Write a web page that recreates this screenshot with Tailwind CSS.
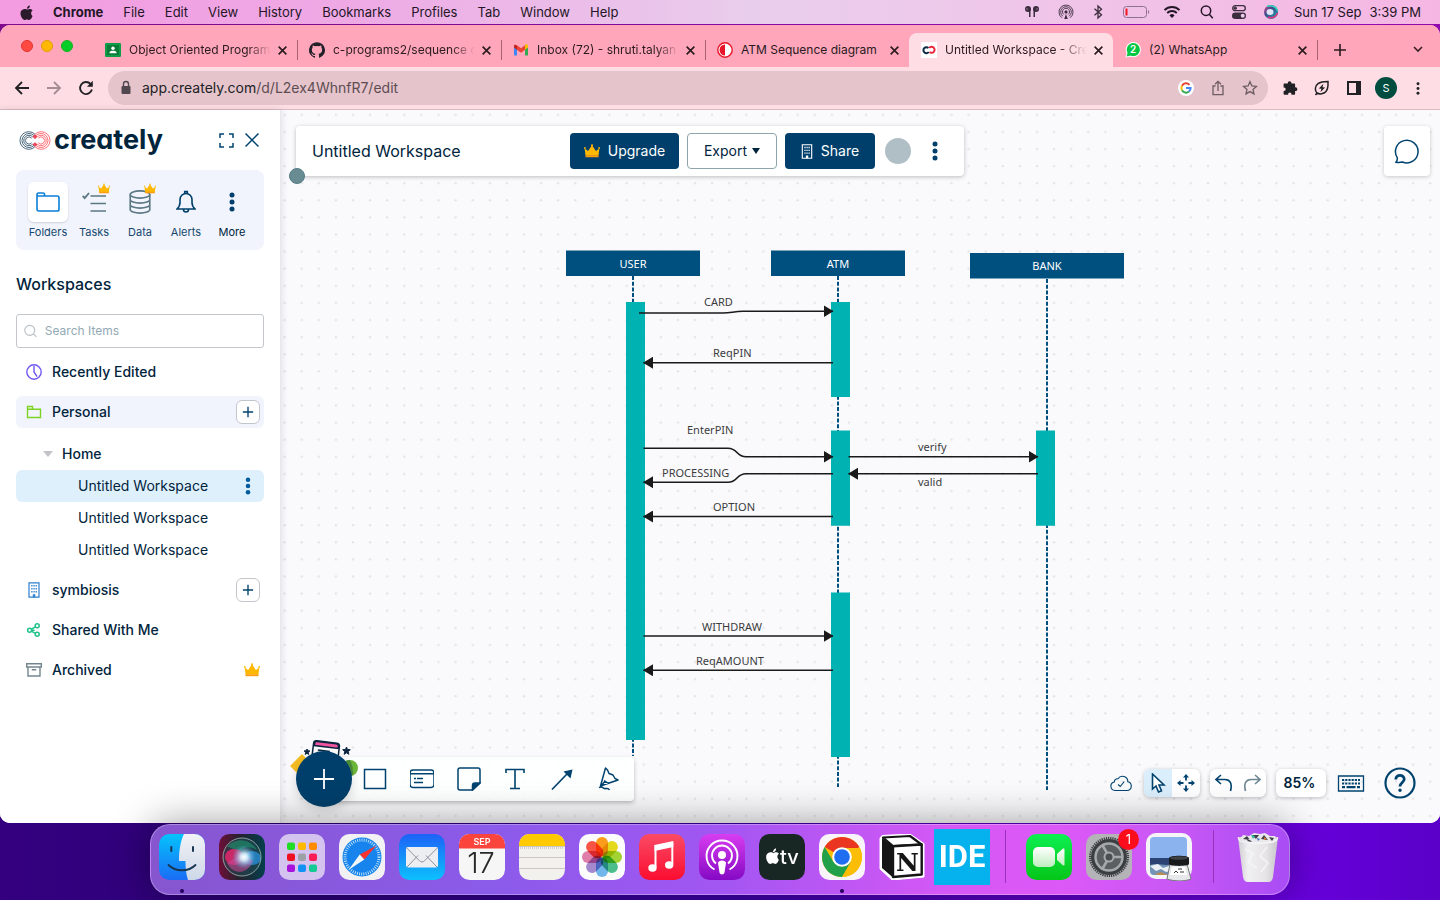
<!DOCTYPE html>
<html lang="en">
<head>
<meta charset="utf-8">
<meta name="viewport" content="width=device-width, initial-scale=1">
<title>Untitled Workspace - Creately</title>
<script src="https://cdn.jsdelivr.net/npm/@tailwindcss/browser@4"></script>
</head>
<body class="flex h-screen min-h-[700px] flex-col overflow-hidden bg-[linear-gradient(180deg,#b8109a_0,transparent_60px),linear-gradient(90deg,#34007f_0%,#2b0078_22%,#3c00a8_50%,#5c00c8_72%,#6a00e0_88%,#5a00c8_100%)] font-['Inter',sans-serif] text-[#00243c]">

<!-- Shared symbols -->
<svg class="hidden" aria-hidden="true">
  <symbol id="apple" viewBox="0 0 14 17"><path d="M11.6 9c0-1.700 1.400-2.500 1.500-2.600-.8-1.200-2.100-1.400-2.500-1.400-1.100-.1-2.100.6-2.600.6s-1.400-.6-2.200-.6C3.700 5 1 6 1 9.600 1 12.400 3.200 16 5 16c.8 0 1.400-.6 2.300-.6s1.400.6 2.300.6c1.700 0 3.200-3.100 3.400-4-.1 0-1.400-.7-1.400-3zM9.700 3.800c.5-.6.8-1.500.7-2.300-.8 0-1.600.5-2.100 1.100-.5.500-.9 1.400-.8 2.200.9.100 1.700-.4 2.200-1z"/></symbol>
  <symbol id="crown" viewBox="0 0 16 14"><path fill="#ffb800" d="M1.500 11.500.6 4.600l3.500 2.500L8 1.200l3.900 5.900 3.500-2.500-.9 6.900z"/><circle cx=".9" cy="4" r=".9" fill="#ffb800"/><circle cx="8" cy="1.300" r="1" fill="#ffb800"/><circle cx="15.100" cy="4" r=".9" fill="#ffb800"/><path fill="#ff9d0a" d="M1.500 11.300h13v1.900h-13z"/></symbol>
  <symbol id="x" viewBox="0 0 10 10"><path d="m1.500 1.500 7 7m0-7-7 7" fill="none" stroke="currentColor" stroke-width="1.500"/></symbol>
  <symbol id="plus" viewBox="0 0 14 14"><path d="M7 1v12M1 7h12" fill="none" stroke="currentColor" stroke-width="1.600"/></symbol>
  <symbol id="dots" viewBox="0 0 6 20"><circle cx="3" cy="3" r="2.500"/><circle cx="3" cy="10" r="2.500"/><circle cx="3" cy="17" r="2.500"/></symbol>
  <symbol id="building" viewBox="0 0 12 16"><path d="M1 .8h10v14.400H1z" fill="none" stroke="currentColor" stroke-width="1.200"/><path d="M3.200 3h1.300v1.500H3.200zm2.200 0h1.300v1.500H5.400zm2.200 0h1.300v1.500H7.600zM3.200 6h1.300v1.500H3.200zm2.200 0h1.300v1.500H5.400zm2.200 0h1.300v1.500H7.600zM3.200 9h1.300v1.500H3.200zm2.200 0h1.300v1.500H5.400zm2.200 0h1.300v1.500H7.600zM4.800 12.200h2.500v3H4.800z" fill="currentColor"/></symbol>
</svg>

<!-- System menu bar -->
<header class="flex h-6 shrink-0 items-center justify-between bg-[linear-gradient(90deg,#f39be0_0%,#eeaae5_25%,#e9cdec_52%,#edc9ea_65%,#f6b6e3_100%)] pr-[19px] pl-[19px] text-[13px] leading-6 text-[#241626]">
  <nav class="flex items-center gap-5" aria-label="Menu bar">
    <button aria-label="Apple menu" class="-mr-px"><svg class="h-[17px] w-[15px]" fill="#2b1a2c"><use href="#apple"/></svg></button>
    <button class="font-bold">Chrome</button><button>File</button><button>Edit</button><button>View</button><button>History</button><button>Bookmarks</button><button>Profiles</button><button>Tab</button><button>Window</button><button>Help</button>
  </nav>
  <div class="flex items-center">
    <svg class="mr-[18px] h-4 w-4" viewBox="0 0 16 16" fill="#3c2d3e"><circle cx="4" cy="5" r="3"/><path d="M4 5h2.500v8H5V8zM12 5H9.500v8H11V8z"/><circle cx="12" cy="5" r="3"/><path d="M2.500 5h1M12.500 5h1" stroke="#edc9ea"/></svg>
    <svg class="mr-4 h-4 w-4" viewBox="0 0 16 16" fill="none" stroke="#3c2d3e" stroke-width=".9"><path d="M4 13.800a7 7 0 1 1 8 0M4.800 12.200a5.300 5.300 0 1 1 6.400 0M5.800 10.500a3.500 3.500 0 1 1 4.400 0"/><path d="m6.200 15 1.800-5 1.800 5z" fill="#3c2d3e" stroke="none"/><circle cx="8" cy="8" r="1.200" fill="#3c2d3e"/></svg>
    <svg class="mr-4 h-4 w-4" viewBox="0 0 16 16" fill="none" stroke="#3c2d3e" stroke-width="1.300"><path d="m4.500 4.800 7 6L8 14V2l3.500 3.200-7 6"/></svg>
    <svg class="mr-[13px] h-3 w-7" viewBox="0 0 28 12"><rect x="1.500" y=".5" width="23" height="11" rx="3" fill="none" stroke="#8d7290"/><rect x="3.500" y="2.500" width="2" height="7" rx=".5" fill="#f3151c"/><path d="M26 4c1.500.6 1.500 3.400 0 4z" fill="#8d7290"/></svg>
    <svg class="mr-[17px] h-4 w-[18px]" viewBox="0 0 18 16" fill="none" stroke="#241626" stroke-width="1.900"><path d="M1.500 6.200a10.500 10.500 0 0 1 15 0M4.200 9a6.700 6.700 0 0 1 9.600 0"/><path d="m9 14-2.500-2.600a3.500 3.500 0 0 1 5 0z" fill="#241626" stroke="none"/></svg>
    <svg class="mr-[17px] h-4 w-4" viewBox="0 0 16 16" fill="none" stroke="#241626" stroke-width="1.500"><circle cx="8" cy="6.700" r="4.700"/><path d="m11.300 10.200 3.500 4"/></svg>
    <svg class="mr-4 h-4 w-4" viewBox="0 0 16 16"><rect x="1.700" y="1.700" width="12.600" height="5" rx="2.500" fill="none" stroke="#3c2d3e" stroke-width="1.300"/><circle cx="4.300" cy="4.200" r="1.600" fill="#3c2d3e"/><rect x="1" y="8.500" width="14" height="6.500" rx="3.200" fill="#3c2d3e"/><circle cx="11.700" cy="11.700" r="2" fill="#edc9ea"/></svg>
    <svg class="mr-[15px] h-4 w-4" viewBox="0 0 16 16"><defs><linearGradient id="siriMini" x1="0" x2="1" y1="0" y2="1"><stop stop-color="#e8408a"/><stop offset=".4" stop-color="#3b4a8e"/><stop offset="1" stop-color="#14b8b0"/></linearGradient></defs><circle cx="8" cy="8" r="7" fill="url(#siriMini)"/><ellipse cx="7" cy="8" rx="3.500" ry="3" fill="#f4f4ff" opacity=".9"/><path d="M4 2.500c4-2 9 0 10.500 4" stroke="#2fd8b8" stroke-width="1.500" fill="none"/><path d="M5 13c4 2 8 0 9.500-4" stroke="#e5317d" stroke-width="1.500" fill="none"/></svg>
    <time class="flex gap-2"><span>Sun 17 Sep</span><span>3:39 PM</span></time>
  </div>
</header>

<!-- Browser window -->
<main class="mt-px flex min-h-0 flex-1 flex-col overflow-hidden rounded-[10px] bg-[#ffdde4]">

  <!-- Tab strip -->
  <div class="flex h-[42px] shrink-0 items-end bg-[#ffa6ba] text-xs text-[#2a1a1e]">
    <div class="mb-[15px] flex w-[93px] shrink-0 gap-2 pl-[21px]">
      <button aria-label="Close" class="size-3 rounded-full border border-[#e0342d] bg-[#ff4a43]"></button>
      <button aria-label="Minimise" class="size-3 rounded-full border border-[#e09c05] bg-[#ffb800]"></button>
      <button aria-label="Zoom" class="size-3 rounded-full border border-[#14b021] bg-[#05cd27]"></button>
    </div>
    <div class="flex h-[34px] min-w-0 flex-1 items-stretch" role="tablist">
      <div class="relative flex w-[204px] items-center pl-3" role="tab">
        <svg class="size-4 shrink-0" viewBox="0 0 16 16"><rect y="1" width="16" height="14" rx="1" fill="#109d48"/><path d="M2 3h12v10H2z" fill="#0b7c38"/><circle cx="8" cy="6.300" r="1.700" fill="#fff"/><path d="M4.300 11.300c0-2 2-2.600 3.700-2.600s3.700.6 3.700 2.600z" fill="#fff"/></svg>
        <span class="ml-2 w-[142px] overflow-hidden whitespace-nowrap [mask-image:linear-gradient(90deg,#000_84%,transparent)]">Object Oriented Program</span>
        <button aria-label="Close tab" class="ml-1.5"><svg class="size-[11px]"><use href="#x"/></svg></button>
        <i class="absolute -right-px h-5 w-px bg-[#a8626f]"></i>
      </div>
      <div class="relative flex w-[204px] items-center pl-3" role="tab">
        <svg class="size-4 shrink-0" viewBox="0 0 16 16" fill="#24202a"><path d="M8 .2a8 8 0 0 0-2.500 15.600c.4.100.5-.2.500-.4v-1.500c-2.200.5-2.700-.9-2.700-.9-.4-.9-.9-1.200-.9-1.200-.7-.5.100-.5.100-.5.800.1 1.200.8 1.200.8.700 1.300 1.900.9 2.300.7.100-.5.300-.9.500-1.100-1.800-.2-3.600-.9-3.600-4 0-.9.300-1.600.8-2.100-.1-.2-.4-1 .1-2.100 0 0 .7-.2 2.200.8a7.500 7.500 0 0 1 4 0c1.500-1 2.200-.8 2.200-.8.500 1.100.2 1.900.1 2.100.5.600.8 1.300.8 2.100 0 3.100-1.900 3.800-3.700 4 .3.300.6.800.6 1.500v2.200c0 .2.100.5.500.4A8 8 0 0 0 8 .2z"/></svg>
        <span class="ml-2 w-[142px] overflow-hidden whitespace-nowrap [mask-image:linear-gradient(90deg,#000_84%,transparent)]">c-programs2/sequence d</span>
        <button aria-label="Close tab" class="ml-1.5"><svg class="size-[11px]"><use href="#x"/></svg></button>
        <i class="absolute -right-px h-5 w-px bg-[#a8626f]"></i>
      </div>
      <div class="relative flex w-[204px] items-center pl-3" role="tab">
        <svg class="size-4 shrink-0" viewBox="0 0 16 16"><path d="M1 4v9.500h3V7.300z" fill="#4285f4"/><path d="M12 7.300v6.200h3V4z" fill="#34a853"/><path d="M12 3.700v4L15 5.500V4c0-1.600-1.800-2.200-3-1.300z" fill="#fbbc04"/><path d="M1 4v1.500l3 2.200v-4l-.8-.8C2.300 2.300 1 2.800 1 4z" fill="#c5221f"/><path d="M4 3.300v4.400l4 3 4-3V3.300L8 6.300z" fill="#ea4335"/></svg>
        <span class="ml-2 w-[142px] overflow-hidden whitespace-nowrap [mask-image:linear-gradient(90deg,#000_84%,transparent)]">Inbox (72) - shruti.talyan</span>
        <button aria-label="Close tab" class="ml-1.5"><svg class="size-[11px]"><use href="#x"/></svg></button>
        <i class="absolute -right-px h-5 w-px bg-[#a8626f]"></i>
      </div>
      <div class="flex w-[204px] items-center pl-3" role="tab">
        <svg class="size-4 shrink-0" viewBox="0 0 16 16"><circle cx="8" cy="8" r="7.200" fill="#fff" stroke="#e8152a" stroke-width="1.400"/><path d="M8 2.500a5.500 5.500 0 0 0 0 11z" fill="#e8152a"/></svg>
        <span class="ml-2 w-[142px] whitespace-nowrap">ATM Sequence diagram</span>
        <button aria-label="Close tab" class="ml-1.5"><svg class="size-[11px]"><use href="#x"/></svg></button>
      </div>
      <div class="flex w-[204px] items-center rounded-t-lg bg-[#ffdde4] pl-3" role="tab" aria-selected="true">
        <svg class="size-4 shrink-0" viewBox="0 0 16 16"><path d="M0 0h16v16H0z" fill="#fff"/><path d="M7.800 10A3 3 0 1 1 7.500 6" fill="none" stroke="#0d2b45" stroke-width="2"/><path d="M8.200 6a3 3 0 1 1 .3 4" fill="none" stroke="#e8283c" stroke-width="2"/></svg>
        <span class="ml-2 w-[142px] overflow-hidden whitespace-nowrap [mask-image:linear-gradient(90deg,#000_80%,transparent)]">Untitled Workspace - Cre</span>
        <button aria-label="Close tab" class="ml-1.5"><svg class="size-[11px]"><use href="#x"/></svg></button>
      </div>
      <div class="relative flex w-[204px] items-center pl-3" role="tab">
        <svg class="size-4 shrink-0" viewBox="0 0 16 16"><circle cx="8.300" cy="7.700" r="7.600" fill="#fff"/><path d="m.5 15.500 1.500-5 4 4z" fill="#fff"/><circle cx="8.300" cy="7.700" r="6.600" fill="#06c645"/><path d="m1.700 14.400 1-3.800 3 3z" fill="#06c645"/><text x="8.200" y="11.300" text-anchor="middle" font-family="Inter, sans-serif" font-size="10" font-weight="600" fill="#fff">2</text></svg>
        <span class="ml-2 w-[142px] whitespace-nowrap">(2) WhatsApp</span>
        <button aria-label="Close tab" class="ml-1.5"><svg class="size-[11px]"><use href="#x"/></svg></button>
        <i class="absolute -right-px h-5 w-px bg-[#a8626f]"></i>
      </div>
      <button aria-label="New tab" class="ml-4"><svg class="size-[14px]"><use href="#plus"/></svg></button>
    </div>
    <button aria-label="Search tabs" class="mr-4 mb-3"><svg class="size-3" viewBox="0 0 12 12"><path d="m2 4 4 4 4-4" fill="none" stroke="#3a1f27" stroke-width="1.600"/></svg></button>
  </div>

  <!-- Address bar -->
  <div class="flex h-[43px] shrink-0 items-center border-b border-[#d9bdc4] pr-[15px] pl-[14px]">
    <div class="flex gap-4 text-[#202124]">
      <button aria-label="Back"><svg class="size-4" viewBox="0 0 16 16" fill="none" stroke="currentColor" stroke-width="1.800"><path d="M15 8H2.500M8 2 2 8l6 6"/></svg></button>
      <button aria-label="Forward" class="text-[#a58d93]"><svg class="size-4" viewBox="0 0 16 16" fill="none" stroke="currentColor" stroke-width="1.800"><path d="M1 8h12.500M8 2l6 6-6 6"/></svg></button>
      <button aria-label="Reload"><svg class="size-4" viewBox="0 0 16 16" fill="none" stroke="currentColor" stroke-width="1.900"><path d="M13.900 9.500A6 6 0 1 1 12.500 4"/><path d="M14.800.8v6H8.900z" fill="currentColor" stroke="none"/></svg></button>
    </div>
    <form class="ml-[14px] flex h-[34px] flex-1 items-center rounded-full bg-[#e5c4cb] pr-2.5 pl-3">
      <svg class="h-4 w-3" viewBox="0 0 12 16"><rect x="1.500" y="6" width="9" height="8" rx="1" fill="#50474f"/><path d="M3.500 6V4a2.500 2.500 0 0 1 5 0v2" fill="none" stroke="#50474f" stroke-width="1.400"/></svg>
      <label class="relative ml-2.5 flex-1 text-sm leading-5 text-[#5d4d53]">
        <span class="pointer-events-none absolute inset-0" aria-hidden="true"><span class="text-[#202124]">app.creately.com</span>/d/L2ex4WhnfR7/edit</span>
        <input aria-label="Address" class="w-full bg-transparent text-transparent outline-none" value="app.creately.com/d/L2ex4WhnfR7/edit">
      </label>
      <div class="flex gap-4">
        <button type="button" aria-label="Google"><svg class="size-4" viewBox="0 0 16 16"><circle cx="8" cy="8" r="8" fill="#fff"/><g fill="none" stroke-width="2"><path d="M11.500 4.800A4.600 4.600 0 0 0 4 5.700" stroke="#ea4335"/><path d="M4 5.700a4.600 4.600 0 0 0 0 4.600" stroke="#fbbc05"/><path d="M4 10.300a4.600 4.600 0 0 0 7 1.200" stroke="#34a853"/><path d="M11 11.500c1-.9 1.600-2 1.600-3.500H8" stroke="#4285f4"/></g></svg></button>
        <button type="button" aria-label="Share page"><svg class="size-4" viewBox="0 0 16 16" fill="none" stroke="#6d5c62" stroke-width="1.300"><path d="M5.500 6H3v8.700h10V6h-2.500M8 11V1.500M5 4.300l3-3 3 3"/></svg></button>
        <button type="button" aria-label="Bookmark page"><svg class="size-4" viewBox="0 0 16 16" fill="none" stroke="#6d5c62" stroke-width="1.300"><path d="m8 1.700 1.900 4.200 4.500.5-3.400 3 1 4.500L8 11.600l-4 2.300 1-4.500-3.400-3 4.500-.5z"/></svg></button>
      </div>
    </form>
    <div class="ml-[14px] flex items-center gap-[14px] text-[#202124]">
      <button aria-label="Extensions"><svg class="size-4" viewBox="0 0 16 16" fill="currentColor"><path d="M5.700 3.200a1.900 1.900 0 0 1 3.800 0v.4h2.600c.6 0 1 .4 1 1v2.700h.4a1.900 1.900 0 0 1 0 3.800h-.4v2.700c0 .6-.4 1-1 1H9.500v-.5a1.700 1.700 0 0 0-3.400 0v.5H2.600c-.6 0-1-.4-1-1v-2.900H2a1.700 1.700 0 0 0 0-3.400h-.4V4.600c0-.6.4-1 1-1h3.100z"/></svg></button>
      <button aria-label="Energy saver" class="ml-0.5"><svg class="size-4" viewBox="0 0 16 16" fill="none" stroke="currentColor" stroke-width="1.500"><path d="M3 13C.5 10.500.8 6 4 3.700 6.500 1.900 10.500 1.500 14 1.500c.2 4 .2 7.500-2 10-2.300 2.600-6.500 3-9 1.500zm0 0-1.500 2"/><path d="M9.300 3.800 4.900 8.500l2.500.3-1 3.500 4.700-4.800-2.600-.3z" fill="currentColor" stroke="none"/></svg></button>
      <button aria-label="Side panel" class="ml-0.5"><svg class="size-4" viewBox="0 0 16 16"><path d="M2 2h12v12H2z" fill="none" stroke="currentColor" stroke-width="2"/><path d="M10 2h4v12h-4z" fill="currentColor"/></svg></button>
      <button aria-label="Profile" class="-ml-px size-[22px] rounded-full bg-[#004d40] text-[11px] leading-[22px] text-white">S</button>
      <button aria-label="Chrome menu" class="w-[14px]"><svg class="mx-auto h-[13px] w-1" viewBox="0 0 4 14" fill="currentColor"><circle cx="2" cy="2" r="1.600"/><circle cx="2" cy="7" r="1.600"/><circle cx="2" cy="12" r="1.600"/></svg></button>
    </div>
  </div>

  <!-- Application -->
  <div class="flex min-h-0 flex-1 bg-white">

    <aside class="relative z-10 w-[281px] shrink-0 border-r border-[#e8e9ee] bg-white px-4 shadow-[0_0_8px_rgba(0,0,0,0.12)]">
      <div class="flex h-[60px] items-center">
        <svg class="ml-[3px] h-[19px] w-8" viewBox="0 0 32 19" fill="none"><g stroke="#33566e" stroke-width=".9"><path d="M16 3.300A8.800 8.800 0 1 0 16 15.700M15 4.600a7 7 0 1 0 0 9.800M13.800 6a5.200 5.200 0 1 0 0 7M12.600 7.200a3.500 3.500 0 1 0 0 4.600"/></g><g stroke="#ff5f66" stroke-width=".9"><path d="M16 3.300a8.800 8.800 0 1 1 0 12.400M17 4.600a7 7 0 1 1 0 9.800M18.200 6a5.200 5.200 0 1 1 0 7M19.400 7.200a3.500 3.500 0 1 1 0 4.600"/></g><path d="m13.500 5.500 2.500-2.300 2.500 2.300-2.500 2.700zM13.500 13.500l2.500-2.300 2.500 2.300-2.500 2.300z" fill="#e8485a"/></svg>
        <span class="ml-[3px] pb-px text-[27px] leading-8 font-bold [font-feature-settings:'cv11']">creately</span>
        <button aria-label="Full screen" class="ml-auto"><svg class="size-[15px]" viewBox="0 0 15 15" fill="none" stroke="#00436f" stroke-width="1.500"><path d="M1 5V1h4M10 1h4v4M14 10v4h-4M5 14H1v-4"/></svg></button>
        <button aria-label="Close sidebar" class="mr-[5px] ml-[11px]"><svg class="size-[14px]" viewBox="0 0 14 14" fill="none" stroke="#00436f" stroke-width="1.500"><path d="m.5.5 13 13m0-13-13 13"/></svg></button>
      </div>

      <nav class="flex h-20 justify-center rounded-lg bg-[#f1f4fc] pt-3 text-[11px] leading-5 text-[#15486d]" aria-label="Panels">
        <button class="flex w-[46px] flex-col items-center">
          <span class="grid size-10 place-items-center rounded-md bg-white shadow-[0_1px_2px_rgba(0,0,0,0.15)]"><svg class="h-5 w-6" viewBox="0 0 24 20" fill="none" stroke="#0b7fd8" stroke-width="1.600"><path d="M1 17V2.500C1 1.500 1.500 1 2.500 1h4.700c.8 0 1.200.4 1.300 1.200V4h12.700c1 0 1.800.7 1.800 1.700v11.500c0 1-.8 1.800-1.800 1.800H2.800C1.800 19 1 18.200 1 17zM1 4h8"/></svg></span>
          <span>Folders</span></button>
        <button class="relative flex w-[46px] flex-col items-center">
          <span class="grid size-10 place-items-center"><svg class="size-6" viewBox="0 0 24 24" fill="none" stroke="#5b7884"><path d="M8.500 6H24M8.500 13.500H24M8.500 21H24" stroke-width="1.700"/><path d="m.7 6 2 2L7 3" stroke-width="1.900"/></svg></span>
          <svg class="absolute top-px right-[7px] h-[11px] w-3"><use href="#crown"/></svg>
          <span>Tasks</span></button>
        <button class="relative flex w-[46px] flex-col items-center">
          <span class="grid size-10 place-items-center"><svg class="h-6 w-[22px]" viewBox="0 0 22 24" fill="none" stroke="#5b7884" stroke-width="1.600"><ellipse cx="11" cy="4.500" rx="9.800" ry="3.600"/><path d="M1.200 4.500v15c0 2 4.400 3.600 9.800 3.600s9.800-1.600 9.800-3.600v-15M1.200 9.500c0 2 4.400 3.600 9.800 3.600s9.800-1.600 9.800-3.600M1.200 14.500c0 2 4.400 3.600 9.800 3.600s9.800-1.600 9.800-3.600"/></svg></span>
          <svg class="absolute top-px right-[7px] h-[11px] w-3"><use href="#crown"/></svg>
          <span>Data</span></button>
        <button class="flex w-[46px] flex-col items-center">
          <span class="grid size-10 place-items-center"><svg class="h-6 w-5" viewBox="0 0 20 24" fill="none" stroke="#003f6b" stroke-width="1.600"><path d="M1 19c2.200-2 3-3.500 3-6.500V9.500a6 6 0 0 1 12 0v3c0 3 .8 4.500 3 6.500zM8.700 3.200V1.500h2.600v1.700M7.500 19.500a2.500 2.500 0 0 0 5 0"/></svg></span>
          <span>Alerts</span></button>
        <button class="flex w-[46px] flex-col items-center text-[#00243c]">
          <span class="grid size-10 place-items-center"><svg class="h-5 w-1.5" fill="#003f6b"><use href="#dots"/></svg></span>
          <span>More</span></button>
      </nav>

      <h2 class="mt-[22px] text-base leading-6 font-medium">Workspaces</h2>
      <label class="mt-[18px] flex h-[34px] items-center rounded-[3px] border border-[#c3c6ca] pl-[7px]">
        <svg class="size-[14px]" viewBox="0 0 14 14" fill="none" stroke="#b9bec3" stroke-width="1.200"><circle cx="6.300" cy="6.300" r="5.500"/><path d="m10.200 10.200 3.300 3.300"/></svg>
        <input type="search" aria-label="Search items" placeholder="Search Items" class="ml-2 w-full min-w-0 bg-transparent text-xs outline-none placeholder:text-[#93a9b3]">
      </label>

      <div class="mt-2 flex flex-col gap-2 text-sm font-medium">
        <a href="#recent" class="flex h-8 items-center pl-2.5"><svg class="size-4" viewBox="0 0 16 16" fill="none" stroke="#7256f0" stroke-width="1.400"><circle cx="8" cy="8" r="7.200"/><path d="M8 2v6l3 4.500"/></svg><span class="ml-2.5">Recently Edited</span></a>
        <div class="flex h-8 items-center rounded-md bg-[#f1f4fc] pr-1 pl-2.5"><svg class="size-4" viewBox="0 0 16 16" fill="none" stroke="#7ed321" stroke-width="1.400"><path d="M1.500 13.500v-11h5v2.700h8v8.300zM1.500 5.200h5"/></svg><a href="#personal" class="ml-2.5 flex-1">Personal</a>
          <button aria-label="Add to Personal" class="grid size-6 place-items-center rounded-md border border-[#c3c6ca] bg-white text-[#00436f]"><svg class="size-3"><use href="#plus"/></svg></button></div>
        <ul class="mt-0.5 font-normal">
          <li class="flex h-8 items-center pl-[27px] font-medium"><svg class="h-1.5 w-2.5" viewBox="0 0 10 6"><path d="M0 0h10L5 6z" fill="#c3c4c9"/></svg><a href="#home" class="ml-[9px]">Home</a></li>
          <li class="flex h-8 items-center rounded-md bg-[#dff0fd] pr-[13px] pl-[62px]"><a href="#w1" class="flex-1">Untitled Workspace</a><button aria-label="Workspace options"><svg class="h-[18px] w-[6px]" fill="#005b9c"><use href="#dots"/></svg></button></li>
          <li class="flex h-8 items-center pl-[62px]"><a href="#w2">Untitled Workspace</a></li>
          <li class="flex h-8 items-center pl-[62px]"><a href="#w3">Untitled Workspace</a></li>
        </ul>
        <div class="flex h-8 items-center pr-1 pl-2.5"><svg class="size-4 text-[#2f7fcd]"><use href="#building"/></svg><a href="#symbiosis" class="ml-2.5 flex-1">symbiosis</a>
          <button aria-label="Add to symbiosis" class="grid size-6 place-items-center rounded-md border border-[#c3c6ca] bg-white text-[#00436f]"><svg class="size-3"><use href="#plus"/></svg></button></div>
        <a href="#shared" class="flex h-8 items-center pl-2.5"><svg class="size-4" viewBox="0 0 16 16" fill="none" stroke="#1fc28b" stroke-width="1.500"><circle cx="3.600" cy="8.200" r="2"/><circle cx="11.200" cy="3.800" r="2"/><circle cx="11.200" cy="12.200" r="2"/><path d="M5.600 8.200h3M5.400 7.200l4-2.400M5.400 9.200l4 2.100"/></svg><span class="ml-2.5">Shared With Me</span></a>
        <a href="#archived" class="flex h-8 items-center pr-1 pl-2.5"><svg class="size-4" viewBox="0 0 16 16" fill="none" stroke="#73868f" stroke-width="1.400"><path d="M.7 1.700h14.600V5H.7zM2 5v9h12V5M5.800 7.700h4.400"/></svg><span class="ml-2.5 flex-1">Archived</span><svg class="h-[14px] w-4"><use href="#crown"/></svg></a>
      </div>
    </aside>

    <!-- Canvas -->
    <section class="relative flex min-w-0 flex-1 flex-col justify-between bg-[#fafafc]" aria-label="Canvas">
      <svg class="absolute inset-0 h-full w-full" font-family="'Noto Sans', sans-serif" font-size="11" role="img" aria-label="ATM sequence diagram">
        <defs>
          <pattern id="grid" x="-5" y="-4" width="17.100" height="17.100" patternUnits="userSpaceOnUse"><circle cx="8.600" cy="8.700" r="1.200" fill="#e4e4e8"/></pattern>
          <marker id="head" markerUnits="userSpaceOnUse" markerWidth="10" markerHeight="12" refX="9.500" refY="6" orient="auto"><path d="M0 0v12l10-6z" fill="#1a1a1a"/></marker>
        </defs>
        <rect width="100%" height="100%" fill="url(#grid)"/>
        <g transform="translate(-281 -110)">
          <g stroke="#00507f" stroke-width="2" stroke-dasharray="4 1.700"><path d="M633 276v480M838 276v511M1047 279v511"/></g>
          <g fill="#00507f"><path d="M566 250.500h134v25.500H566zM771 250.500h134v25.500H771zM970 253h154v25.500H970z"/></g>
          <g fill="#00b2b2"><path d="M626 302h19v438h-19zM831 302h19v95h-19zM831 430.500h19v95.300h-19zM831 592.500h19v164.500h-19zM1036 430.500h19v95.300h-19z"/></g>
          <g fill="none" stroke="#1a1a1a" stroke-width="1.600">
            <path d="M639 313h84c8 0 11-1.700 20-1.700h90" marker-end="url(#head)"/>
            <path d="M833 362.700H643.500" marker-end="url(#head)"/>
            <path d="M643.500 448.200H728c10 0 8 8.500 18 8.500h87" marker-end="url(#head)"/>
            <path d="M833 473.700h-87c-10 0-8 8.500-18 8.500h-84.500" marker-end="url(#head)"/>
            <path d="M833 516.500H643.500" marker-end="url(#head)"/>
            <path d="M643.500 636H833" marker-end="url(#head)"/>
            <path d="M833 670.300H643.500" marker-end="url(#head)"/>
            <path d="M848.500 456.700h189.500" marker-end="url(#head)"/>
            <path d="M1038 473.700H848.500" marker-end="url(#head)"/>
          </g>
          <g fill="#fff" text-anchor="middle"><text x="633" y="268">USER</text><text x="838" y="268">ATM</text><text x="1047" y="270">BANK</text></g>
          <g fill="#3c3c3e"><text x="704" y="306">CARD</text><text x="713" y="357">ReqPIN</text><text x="687" y="434">EnterPIN</text><text x="662" y="477">PROCESSING</text><text x="713" y="511">OPTION</text><text x="702" y="631">WITHDRAW</text><text x="696" y="665">ReqAMOUNT</text><text x="918" y="451">verify</text><text x="918" y="486">valid</text></g>
        </g>
      </svg>

      <div class="relative flex items-start justify-between pt-4 pr-2.5 pl-[15px]">
        <div class="relative flex h-[50px] w-[668px] items-center rounded bg-white pr-[26px] pl-4 text-sm shadow-[0_1px_4px_rgba(0,0,0,0.25)]">
          <h1 class="flex-1 text-base">Untitled Workspace</h1>
          <div class="flex items-center gap-2">
            <button class="flex h-9 w-[109px] items-center justify-center gap-2 rounded bg-[#003f6b] text-white"><svg class="h-[14px] w-4"><use href="#crown"/></svg>Upgrade</button>
            <button class="flex h-9 w-[90px] items-center justify-center gap-[5px] rounded border border-[#8fa3ad] bg-white">Export<svg class="h-1.5 w-2" viewBox="0 0 8 6"><path d="M0 0h8L4 6z" fill="#00243c"/></svg></button>
            <button class="flex h-9 w-[90px] items-center justify-center gap-2 rounded bg-[#003f6b] text-white"><svg class="h-[15px] w-3"><use href="#building"/></svg>Share</button>
          </div>
          <button aria-label="Account" class="ml-2.5 size-[26px] rounded-full bg-[#b0bfc6]"></button>
          <button aria-label="More options" class="ml-[21px]"><svg class="h-5 w-1.5" fill="#003f6b"><use href="#dots"/></svg></button>
          <span class="absolute -bottom-2 -left-[7px] size-4 rounded-full border border-[#557d85] bg-[#698c93]"></span>
        </div>
        <button aria-label="Comments" class="grid h-[50px] w-[46px] place-items-center rounded bg-white shadow-[0_1px_4px_rgba(0,0,0,0.2)]"><svg class="size-[26px]" viewBox="0 0 26 26" fill="none" stroke="#00436f" stroke-width="1.500"><path d="M2 24.200c1-1.400 1.500-3 1.300-4.500A11.300 11.300 0 1 1 8.500 24c-2 .5-4.500.6-6.500.2z"/></svg></button>
      </div>

      <div class="relative flex items-end justify-between pr-6 pb-4 pl-[15px]">
        <div class="relative flex items-center">
          <svg class="absolute -top-3 -left-2 h-10 w-[72px]" viewBox="0 0 72 40"><path d="m2 27 12-12 12 12-12 12z" fill="#f5bd22"/><circle cx="62" cy="29" r="8" fill="#6db83a"/><path d="M54 27a8 8 0 0 1 8-6 28 28 0 0 1 3 15 8 8 0 0 1-11-9z" fill="#4c8f3c"/><g transform="rotate(7 38 10)" stroke="#0b2540" stroke-width="1.500"><rect x="25" y="3" width="26" height="24" rx="3" fill="#fff"/><path d="M26 8V6a2.500 2.500 0 0 1 2.500-2.500h19A2.500 2.500 0 0 1 50 6v2z" fill="#f254a0"/><path d="M30 12h12M30 15h8"/></g><path d="m58.500 8 1 2.500 2.800.2-2.100 1.800.7 2.800-2.400-1.500-2.400 1.500.7-2.800-2.100-1.800 2.800-.2zM19 10l.8 1.800 2.100.1-1.600 1.400.5 2.100-1.800-1.100-1.800 1.100.5-2.100-1.600-1.400 2.100-.1z" fill="#0b2540" stroke="#0b2540"/></svg>
          <button aria-label="Add shape" class="relative z-10 grid size-14 place-items-center rounded-full bg-[#003f6b] shadow-[0_4px_12px_rgba(0,0,0,0.15)]"><svg class="size-5" viewBox="0 0 20 20"><path d="M10 0v20M0 10h20" stroke="#fff" stroke-width="1.800"/></svg></button>
          <div class="-ml-6 flex h-[44px] w-[306px] items-center rounded bg-white/90 pr-0.5 pl-6 shadow-[0_2px_4px_rgba(0,0,0,0.25)]">
            <button aria-label="Rectangle" class="grid flex-1 place-items-center"><svg class="size-6" viewBox="0 0 24 24" fill="none" stroke="#00436f" stroke-width="1.500"><path d="M1.500 2.500h21v19h-21z"/></svg></button>
            <button aria-label="Card" class="grid flex-1 place-items-center"><svg class="size-6" viewBox="0 0 24 24" fill="none" stroke="#00436f" stroke-width="1.500"><rect x="0" y="3" width="24" height="17.500" rx="3"/><path d="M0 6.800h24M4 11.500h2m1 0h6M4 15.500h9"/></svg></button>
            <button aria-label="Sticky note" class="grid flex-1 place-items-center"><svg class="size-6" viewBox="0 0 24 24" fill="none" stroke="#00436f" stroke-width="1.500"><path d="M15.500 23H3a2 2 0 0 1-2-2V3a2 2 0 0 1 2-2h18a2 2 0 0 1 2 2v13z"/><path d="M15.500 23v-4.500a2.500 2.500 0 0 1 2.500-2.500h5z" fill="#00436f"/></svg></button>
            <button aria-label="Text" class="grid flex-1 place-items-center"><svg class="size-6" viewBox="0 0 24 24" fill="none" stroke="#00436f" stroke-width="1.600"><path d="M3 6V2.500h18V6M12 2.500v19M7 21.500h10"/></svg></button>
            <button aria-label="Connector" class="grid flex-1 place-items-center"><svg class="size-6" viewBox="0 0 24 24"><path d="M2 22.500 17 7" stroke="#00436f" stroke-width="1.700"/><path d="M22.500 2.500 13.500 4.500l7 7z" fill="#00436f"/></svg></button>
            <button aria-label="Draw" class="grid flex-1 place-items-center"><svg class="size-6" viewBox="0 0 24 24" fill="none" stroke="#00436f" stroke-width="1.500" stroke-linejoin="round"><path d="M8.500 1 3.500 19l17.500-6-3-1.500-2-3.500-4-1.500L10.500 3zM4 18.500l4.500-4.500M7 13.500l4.500 3M2 20.500c5-2 3 2 7 1 2-.3 3 .5 3.500 1.500"/></svg></button>
          </div>
        </div>

        <div class="mb-2 flex items-center text-[#00436f]">
          <svg class="mr-3 h-[18px] w-[22px]" viewBox="0 0 22 18" fill="none" stroke="#00436f" stroke-width="1.100" aria-label="Saved"><path d="M5 16.500a4.300 4.300 0 0 1-.7-8.500A3.500 3.500 0 0 1 8 4.800a5.300 5.300 0 0 1 9.800 3A4.400 4.400 0 0 1 17 16.500zM8 10.500l2.300 2 4-5"/></svg>
          <div class="flex rounded-md bg-white shadow-[0_1px_4px_rgba(0,0,0,0.25)]">
            <button aria-label="Select" class="grid size-7 place-items-center rounded-l-md bg-[#dbeefb]"><svg class="size-5" viewBox="0 0 20 20" fill="#fff" stroke="#00436f" stroke-width="1.600"><path d="M4.500 1v15l3.500-3 2.500 6 3-1.200L11 12h5z"/></svg></button>
            <button aria-label="Pan" class="grid size-7 place-items-center"><svg class="size-[18px]" viewBox="0 0 18 18"><path d="M9 6.500V2M9 11.500V16M6.500 9H2M11.500 9H16" stroke="#00436f" stroke-width="1.800"/><path d="m9 0 3 3.500H6zM9 18l3-3.500H6zM0 9l3.500-3v6zM18 9l-3.500-3v6z" fill="#00436f"/></svg></button>
          </div>
          <div class="ml-2.5 flex rounded-md bg-white shadow-[0_1px_4px_rgba(0,0,0,0.25)]">
            <button aria-label="Undo" class="grid size-7 place-items-center"><svg class="size-[18px]" viewBox="0 0 18 18" fill="none" stroke="#00436f" stroke-width="1.600"><path d="M6 1 1 5.500 6 10M1 5.500h9c5 0 7.500 4 5.500 11.500"/></svg></button>
            <button aria-label="Redo" class="grid size-7 place-items-center"><svg class="size-[18px]" viewBox="0 0 18 18" fill="none" stroke="#6d8793" stroke-width="1.600"><path d="m12 1 5 4.500-5 4.500M17 5.500H8c-5 0-7.500 4-5.500 11.500"/></svg></button>
          </div>
          <button class="ml-2.5 h-7 w-[50px] rounded-md bg-white pr-[3px] text-sm font-semibold text-[#00243c] shadow-[0_1px_4px_rgba(0,0,0,0.25)]">85%</button>
          <button aria-label="Keyboard shortcuts" class="ml-[11px]"><svg class="h-[17px] w-7" viewBox="0 0 28 17"><path d="M1.500 1h25v15h-25z" fill="none" stroke="#00436f" stroke-width="1.300"/><path d="M5 5h18M5 8.500h18" stroke="#00436f" stroke-width="2.200" stroke-dasharray="2.200 1"/><path d="M5 12.200h3M9.500 12.200h9M20 12.200h3" stroke="#00436f" stroke-width="2.200"/></svg></button>
          <button aria-label="Help" class="ml-[19px]"><svg class="size-8" viewBox="0 0 32 32" fill="none" stroke="#00436f"><circle cx="16" cy="16" r="14.500" stroke-width="2.200"/><path d="M11.800 12.500c0-5.500 8.400-5.300 8.400-.3 0 3.300-4.200 3.300-4.200 7.300" stroke-width="2.800"/><circle cx="16" cy="23.300" r="1" fill="#00436f" stroke-width="1.500"/></svg></button>
        </div>
      </div>
    </section>
  </div>
</main>

<!-- Dock -->
<footer class="relative z-20 mt-px flex h-[76px] shrink-0 justify-center">
  <nav class="flex h-[71px] items-center rounded-[20px] border border-white/30 bg-[linear-gradient(90deg,#8656cf_0%,#8b5bea_30%,#a256f2_50%,#d558f5_70%,#dc58f7_80%,#c858f5_90%,#a94df5_100%)] px-px pb-1.5 shadow-[0_0_40px_rgba(0,0,0,0.4)]" aria-label="Dock">
    <button aria-label="Finder" class="relative grid w-[60px] place-items-center"><svg class="size-[46px]" viewBox="0 0 46 46"><defs><linearGradient id="fa" x2="0" y2="1"><stop stop-color="#05c3fb"/><stop offset="1" stop-color="#1a6cf5"/></linearGradient><linearGradient id="fb" x2="0" y2="1"><stop stop-color="#f1f2f6"/><stop offset="1" stop-color="#ced8e8"/></linearGradient></defs><rect width="46" height="46" rx="10.500" fill="url(#fa)"/><path d="M25 0h10.500A10.500 10.500 0 0 1 46 10.500v25A10.500 10.500 0 0 1 35.500 46H29c-2-6-2.500-12-2.500-19H20C20 18 21 8 25 0z" fill="url(#fb)"/><path d="M12.300 13v4M34 13v4" stroke="#173652" stroke-width="2" stroke-linecap="round"/><path d="M9.500 31c7 7 20 7 27 0" fill="none" stroke="#173652" stroke-width="1.800" stroke-linecap="round"/></svg><i class="absolute -bottom-[13px] size-1 rounded-full bg-[#24005c]"></i></button>
    <button aria-label="Siri" class="grid w-[60px] place-items-center"><svg class="size-[46px]" viewBox="0 0 46 46"><defs><linearGradient id="sa"><stop stop-color="#6e0f38"/><stop offset=".45" stop-color="#24222f"/><stop offset="1" stop-color="#053f4c"/></linearGradient><radialGradient id="sb"><stop stop-color="#fff"/><stop offset=".3" stop-color="#d7f2ff" stop-opacity=".9"/><stop offset="1" stop-color="#4aa8e8" stop-opacity="0"/></radialGradient></defs><rect width="46" height="46" rx="10.500" fill="url(#sa)"/><circle cx="23" cy="23" r="19" fill="#234e55" opacity=".5"/><path d="M8 13c8-10 23-9 30 3-8-5-16-3-19 5-4-6-7-8-11-8z" fill="#1c9a70" opacity=".6"/><ellipse cx="15" cy="23" rx="9" ry="8" fill="#f0266f" opacity=".8"/><ellipse cx="33" cy="24" rx="9" ry="7" fill="#2890dc" opacity=".75"/><path d="M8 29c7-6 18-9 26-2-5 13-19 15-26 2z" fill="#c34893" opacity=".6"/><circle cx="23" cy="23" r="19" fill="none" stroke="#a9c5c0" stroke-opacity=".75"/><circle cx="25" cy="23" r="12" fill="url(#sb)"/></svg></button>
    <button aria-label="Launchpad" class="grid w-[60px] place-items-center"><svg class="size-[46px]" viewBox="0 0 46 46"><rect width="46" height="46" rx="10.500" fill="#d5c3ef"/><g><rect x="8" y="8.500" width="8" height="7.500" rx="2" fill="#20dc25"/><rect x="19" y="8.500" width="8" height="7.500" rx="2" fill="#ffb900"/><rect x="30" y="8.500" width="8" height="7.500" rx="2" fill="#ff8c00"/><rect x="8" y="19.500" width="8" height="7.500" rx="2" fill="#ef0f22"/><rect x="19" y="19.500" width="8" height="7.500" rx="2" fill="#9ea0a8"/><rect x="30" y="19.500" width="8" height="7.500" rx="2" fill="#fb1c57"/><rect x="8" y="30.500" width="8" height="7.500" rx="2" fill="#a813dc"/><rect x="19" y="30.500" width="8" height="7.500" rx="2" fill="#1391f5"/><rect x="30" y="30.500" width="8" height="7.500" rx="2" fill="#14cb93"/></g></svg></button>
    <button aria-label="Safari" class="grid w-[60px] place-items-center"><svg class="size-[46px]" viewBox="0 0 46 46"><rect width="46" height="46" rx="10.500" fill="#f2f2f4"/><circle cx="23" cy="23" r="19.500" fill="#1684ec"/><circle cx="23" cy="23" r="17" fill="none" stroke="#d9efff" stroke-width="3" stroke-dasharray=".8 1.400"/><path d="m37.500 11.500-12.200 14-4.600-5z" fill="#f8322f"/><path d="m9.500 36 11.200-15.500 4.600 5z" fill="#f2f5f8"/></svg></button>
    <button aria-label="Mail" class="grid w-[60px] place-items-center"><svg class="size-[46px]" viewBox="0 0 46 46"><defs><linearGradient id="ma" x2="0" y2="1"><stop stop-color="#1d62f7"/><stop offset="1" stop-color="#0dc0fd"/></linearGradient></defs><rect width="46" height="46" rx="10.500" fill="url(#ma)"/><rect x="7" y="13" width="32" height="20.500" rx="2" fill="#eceef2"/><path d="m7.500 13.800 13 13c1.500 1.500 3.500 1.500 5 0l13-13M8 33l11-11.500M38 33 27 21.500" fill="none" stroke="#8b919c"/></svg></button>
    <button aria-label="Calendar" class="grid w-[60px] place-items-center"><svg class="size-[46px]" viewBox="0 0 46 46"><rect width="46" height="46" rx="10.500" fill="#f7f6f6"/><path d="M0 14.500v-4A10.500 10.500 0 0 1 10.500 0h25A10.500 10.500 0 0 1 46 10.500v4z" fill="#fb453c"/><text x="23" y="10.800" text-anchor="middle" font-family="Inter, sans-serif" font-size="9" font-weight="600" fill="#fff">SEP</text><text x="22" y="39" text-anchor="middle" font-family="Inter, sans-serif" font-size="29" font-weight="300" fill="#29292b">17</text></svg></button>
    <button aria-label="Notes" class="grid w-[60px] place-items-center"><svg class="size-[46px]" viewBox="0 0 46 46"><rect width="46" height="46" rx="10.500" fill="#f3f1ee"/><path d="M0 12v-1.500A10.500 10.500 0 0 1 10.500 0h25A10.500 10.500 0 0 1 46 10.500V12z" fill="#ffcb00"/><path d="M0 12.500h46M0 23.500h46M0 34.500h46" stroke="#cbc8c4"/><path d="M1 14h44" stroke="#b5b1ab" stroke-dasharray="1 1"/></svg></button>
    <button aria-label="Photos" class="grid w-[60px] place-items-center"><svg class="size-[46px]" viewBox="0 0 46 46"><rect width="46" height="46" rx="10.500" fill="#fcfcfd"/><g class="[&>*]:mix-blend-multiply"><rect x="17" y="3" width="12" height="19.500" rx="6" fill="#ff9e1b"/><rect x="17" y="3" width="12" height="19.500" rx="6" fill="#e7dc1c" transform="rotate(45 23 23)"/><rect x="17" y="3" width="12" height="19.500" rx="6" fill="#a5d533" transform="rotate(90 23 23)"/><rect x="17" y="3" width="12" height="19.500" rx="6" fill="#4fc08d" transform="rotate(135 23 23)"/><rect x="17" y="3" width="12" height="19.500" rx="6" fill="#72b8ec" transform="rotate(180 23 23)"/><rect x="17" y="3" width="12" height="19.500" rx="6" fill="#a78bd0" transform="rotate(225 23 23)"/><rect x="17" y="3" width="12" height="19.500" rx="6" fill="#e280ad" transform="rotate(270 23 23)"/><rect x="17" y="3" width="12" height="19.500" rx="6" fill="#fa5545" transform="rotate(315 23 23)"/></g></svg></button>
    <button aria-label="Music" class="grid w-[60px] place-items-center"><svg class="size-[46px]" viewBox="0 0 46 46"><defs><linearGradient id="mu" x2="0" y2="1"><stop stop-color="#fb4b65"/><stop offset="1" stop-color="#fa0d30"/></linearGradient></defs><rect width="46" height="46" rx="10.500" fill="url(#mu)"/><path d="M16.500 11v22M33.300 8.500V30" stroke="#fff" stroke-width="2"/><path d="M15.500 11 34.300 7v6l-18.800 4z" fill="#fff"/><ellipse cx="13.500" cy="34" rx="4.200" ry="3.700" fill="#fff"/><ellipse cx="30.200" cy="31" rx="4.200" ry="3.700" fill="#fff"/></svg></button>
    <button aria-label="Podcasts" class="grid w-[60px] place-items-center"><svg class="size-[46px]" viewBox="0 0 46 46"><defs><linearGradient id="po" x2="0" y2="1"><stop stop-color="#d83df0"/><stop offset="1" stop-color="#8509c4"/></linearGradient></defs><rect width="46" height="46" rx="10.500" fill="url(#po)"/><g fill="none" stroke="#fff" stroke-width="1.900"><path d="M15.500 35.500a15.500 15.500 0 1 1 15 0M17 29.500a10 10 0 1 1 12 0"/></g><circle cx="23" cy="21" r="4" fill="#fff"/><path d="M19 29c0-3.500 8-3.500 8 0l-1.500 9.500c-.5 2.500-4.500 2.500-5 0z" fill="#fff"/></svg></button>
    <button aria-label="Apple TV" class="grid w-[60px] place-items-center"><svg class="size-[46px]" viewBox="0 0 46 46"><rect width="46" height="46" rx="10.500" fill="#182624"/><svg x="6" y="13" width="15" height="18" fill="#fff"><use href="#apple"/></svg><text x="21" y="30" font-family="Inter, sans-serif" font-size="20" font-weight="500" fill="#fff">tv</text></svg></button>
    <button aria-label="Chrome" class="relative grid w-[60px] place-items-center"><svg class="size-[46px]" viewBox="0 0 46 46"><rect width="46" height="46" rx="10.500" fill="#f8f4fa"/><circle cx="23" cy="23" r="20" fill="#fbbd05"/><path d="M23 23 5.700 13A20 20 0 0 1 40.300 13z" fill="#ea3520"/><path d="M14.500 28 5.700 13A20 20 0 0 0 23 43l8.700-15z" fill="#1fa049"/><path d="M23 14h17.800A20 20 0 0 1 23 43l9-15z" fill="#fbbd05"/><circle cx="23" cy="23" r="9.800" fill="#fff"/><circle cx="23" cy="23" r="7.800" fill="#1f6ef1"/></svg><i class="absolute -bottom-[13px] size-1 rounded-full bg-[#24005c]"></i></button>
    <button aria-label="Notion" class="grid w-[60px] place-items-center"><svg class="size-[46px]" viewBox="0 0 46 46"><path d="M1 4 3 1.500 31 0l14 9.500V43l-32 3L1 35z" fill="#fff" stroke="#fff" stroke-linejoin="round"/><path d="M4 3.500 31 2l11.500 8.500L14 12z" fill="#fff" stroke="#151515" stroke-width="2.200" stroke-linejoin="round"/><path d="m3 4 11 8v31.500L3 34z" fill="#151515"/><path d="m14 12.300 28.700-1.800v30L14 43z" fill="#fff" stroke="#151515" stroke-width="2.400" stroke-linejoin="round"/><text x="28.500" y="36.500" text-anchor="middle" font-family="'DejaVu Serif', serif" font-size="25" font-weight="700" fill="#151515">N</text></svg></button>
    <button aria-label="IDE" class="grid w-[60px] place-items-center"><svg class="size-14" viewBox="0 0 56 56"><path d="M0 0h56v56H0z" fill="#05b2ee"/><text x="28" y="38" text-anchor="middle" font-family="Roboto, sans-serif" font-size="31" font-weight="700" fill="#fff">IDE</text></svg></button>
    <i class="mx-[13px] h-[53px] w-px bg-[#9c30ba]"></i>
    <button aria-label="FaceTime" class="grid w-[60px] place-items-center"><svg class="size-[46px]" viewBox="0 0 46 46"><defs><linearGradient id="ft" x2="0" y2="1"><stop stop-color="#0df052"/><stop offset="1" stop-color="#05c518"/></linearGradient><linearGradient id="fc" x2="0" y2="1"><stop stop-color="#fff"/><stop offset="1" stop-color="#bfeec0"/></linearGradient></defs><rect width="46" height="46" rx="10.500" fill="url(#ft)"/><rect x="7" y="13" width="22" height="20" rx="5" fill="url(#fc)"/><path d="m31 20 5.500-5c1-.8 2-.5 2 .8v14.400c0 1.300-1 1.600-2 .8L31 26z" fill="url(#fc)"/></svg></button>
    <button aria-label="System Preferences" class="relative grid w-[60px] place-items-center"><svg class="size-[46px]" viewBox="0 0 46 46"><rect width="46" height="46" rx="10.500" fill="#b4b4b8"/><circle cx="23" cy="23" r="19" fill="none" stroke="#35383b" stroke-width="2" stroke-dasharray="1.200 1"/><circle cx="23" cy="23" r="18" fill="#3a3e41"/><circle cx="23" cy="23" r="13.500" fill="#5b5f62" stroke="#a5a9ab" stroke-width="2.500"/><circle cx="23" cy="23" r="4.500" fill="#4a4e51" stroke="#a5a9ab" stroke-width="2"/><path d="M27.500 23H37M21 27l-5 8.500M21 19l-5-8.500" stroke="#a5a9ab" stroke-width="2.500"/></svg><span class="absolute -top-[5px] right-0 size-[21px] rounded-full bg-[#fb0d1b] text-center text-[13px] leading-[21px] text-white">1</span></button>
    <button aria-label="Preview" class="grid w-[60px] place-items-center"><svg class="size-[48px]" viewBox="0 0 48 48"><rect x="1" width="46" height="46" rx="10" fill="#f5f5f7"/><path d="M5 25V8a4 4 0 0 1 4-4h29a4 4 0 0 1 4 4v17z" fill="#8bb3ee"/><path d="M5 25h37v8H5z" fill="#2c4474"/><path d="M5 32c8-3 14 2 22-1l15 2v9H9a4 4 0 0 1-4-4z" fill="#7593b6"/><path d="m5 33 8-2 5 4 9-3 3 5-9 2-5-3-5 2z" fill="#edf2f7"/><path d="m10 41 6-2 7 3H12z" fill="#b98d53"/><path d="M25 31h17l4 15c-6 2.500-17 2.500-24 0z" fill="#e7e8ea" stroke="#77797d"/><path d="M27 34h13l2 8H25z" fill="#fff"/><path d="m29 40 2-2 2 2m2-1h4M33 36h4" stroke="#333" fill="none"/><path d="M24 25c0-3 20-3 20 0v6c0 2.500-20 2.500-20 0z" fill="#17191b"/><ellipse cx="34" cy="25" rx="9" ry="1.800" fill="#3e4145"/></svg></button>
    <i class="mx-[14px] h-[53px] w-px bg-[#9c30ba]"></i>
    <button aria-label="Trash" class="grid w-[60px] place-items-center"><svg class="h-[52px] w-[42px]" viewBox="0 0 42 52"><defs><linearGradient id="bin"><stop stop-color="#cfcdd1"/><stop offset=".25" stop-color="#f0eff1"/><stop offset=".7" stop-color="#e6e4e6"/><stop offset="1" stop-color="#c9c5cc"/></linearGradient></defs><path d="M1 6h40l-5 40c-.5 3-2 5-5 5H11c-3 0-4.500-2-5-5z" fill="url(#bin)"/><path d="m8 18 8 5-5 8 9 6M30 16l-7 9 8 7-7 9" fill="none" stroke="#f8f7f8" stroke-width="2" opacity=".7"/><path d="m3 8 3-4 6 1 5-3 6 1 5-1 5 3 5 0 2 4-4 3-8-1-6 2-7-2-6 1z" fill="#e9e8ea"/><path d="m6 8 4-3 3 4zM15 4l4 4 3-4zM24 8l3-4 4 5zM32 6l5 1-2 3zM10 10l5 1-3-3z" fill="#3f3d49"/><path d="m14 4 4 1-2 3z" fill="#25bba5"/><path d="m27 6 3 2-3 1z" fill="#d67732"/><path d="m20 7 3 1-2 2z" fill="#3770c2"/><path d="M1 6.500 3 10c10 3 26 3 36 0l2-3.500" fill="none" stroke="#f6f5f7" stroke-width="1.300"/></svg></button>
  </nav>
</footer>
</body>
</html>
